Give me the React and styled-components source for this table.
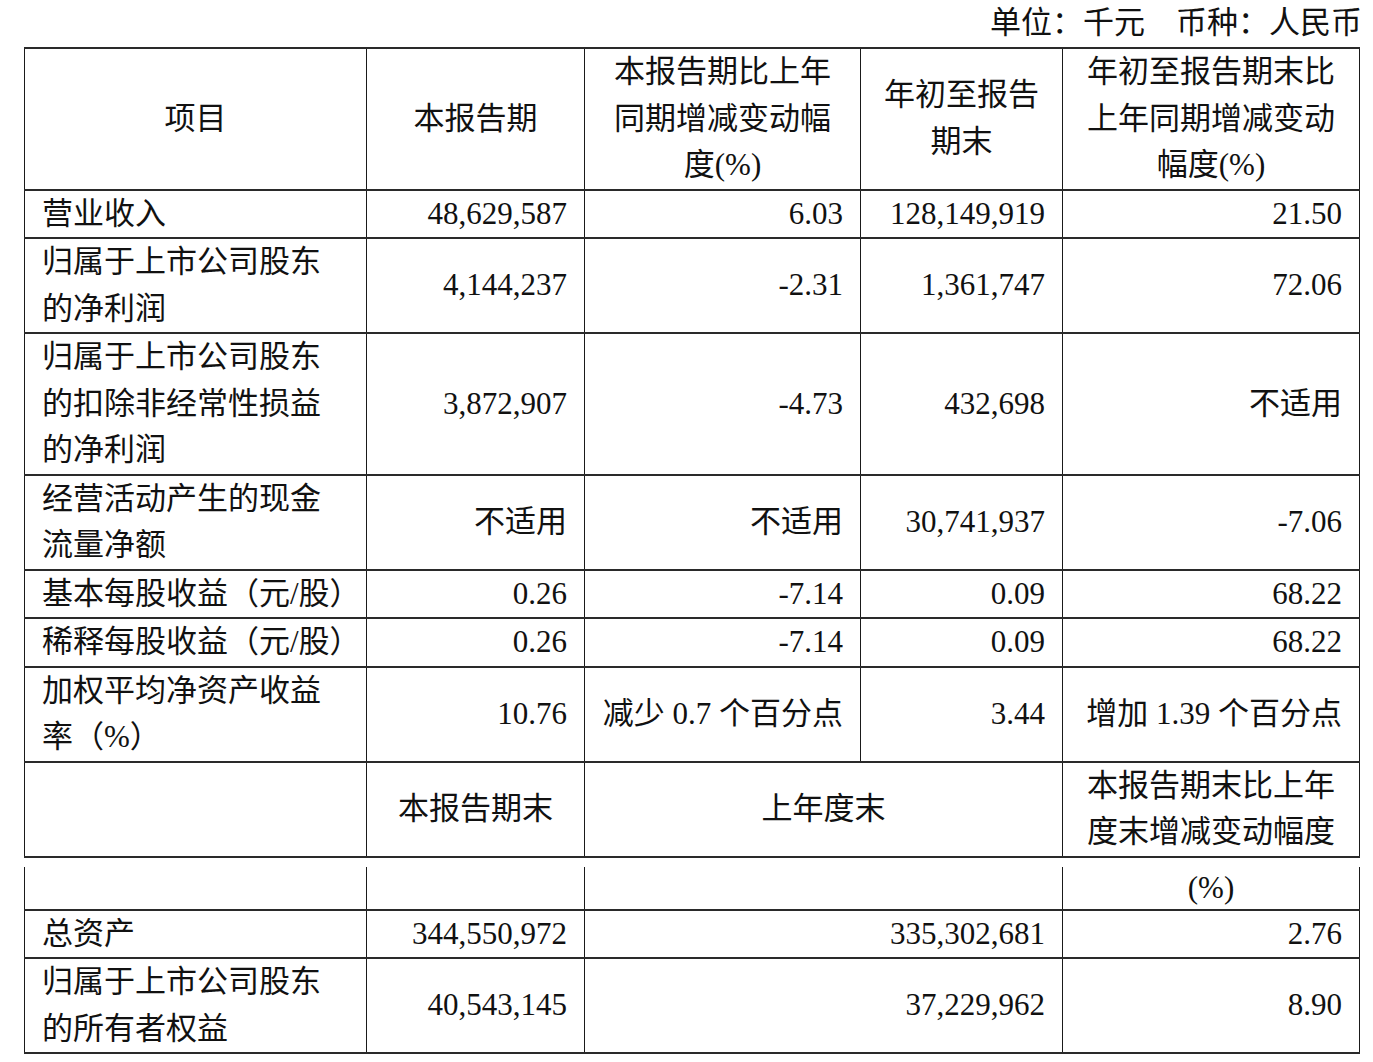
import React from 'react';
import styled, { createGlobalStyle } from 'styled-components';

const GlobalStyle = createGlobalStyle`
    body {
        margin: 0;
        background: #ffffff;
        color: #111111;
        font-family: "Liberation Serif", "Noto Sans CJK SC", serif;
    }
`;

const Page = styled.div`
    width: 1373px;
    padding-bottom: 8px;
    font-size: 31px;
`;

const UnitLine = styled.div`
    height: 47px;
    line-height: 46px;
    text-align: right;
    padding-right: 11px;
    white-space: pre;
`;

const Table = styled.table`
    margin-left: 24px;
    width: 1335px;
    table-layout: fixed;
    border-collapse: collapse;
    margin-top: ${props => props.gap || 0}px;
`;

const Cell = styled.td`
    border-left: 1px solid #1a1a1a;
    border-right: 1px solid #1a1a1a;
    border-top: ${props => props.noTop ? 'none' : '2px solid #2a2a2a'};
    border-bottom: 2px solid #2a2a2a;
    padding: 0 17px;
    line-height: ${props => props.lh || 46.5}px;
    text-align: ${props => props.align || 'left'};
    vertical-align: middle;
    white-space: nowrap;
    overflow: hidden;
`;

const widths = [342, 218, 276, 202, 297];

const Cols = () => (
    <colgroup>
        {widths.map((w, i) => <col key={i} style={{ width: w }} />)}
    </colgroup>
);

const lines = (text) => text.split('|').map((t, i, arr) => (
    <React.Fragment key={i}>{t}{i < arr.length - 1 ? <br /> : null}</React.Fragment>
));

const rows = [
    ["营业收入", "48,629,587", "6.03", "128,149,919", "21.50"],
    ["归属于上市公司股东|的净利润", "4,144,237", "-2.31", "1,361,747", "72.06"],
    ["归属于上市公司股东|的扣除非经常性损益|的净利润", "3,872,907", "-4.73", "432,698", "不适用"],
    ["经营活动产生的现金|流量净额", "不适用", "不适用", "30,741,937", "-7.06"],
    ["基本每股收益（元/股）", "0.26", "-7.14", "0.09", "68.22"],
    ["稀释每股收益（元/股）", "0.26", "-7.14", "0.09", "68.22"],
    ["加权平均净资产收益|率（%）", "10.76", "减少 0.7 个百分点", "3.44", "增加 1.39 个百分点"],
];

const assetRows = [
    ["总资产", "344,550,972", "335,302,681", "2.76"],
    ["归属于上市公司股东|的所有者权益", "40,543,145", "37,229,962", "8.90"],
];

class App extends React.Component {
    render() {
        return (
            <Page>
                <GlobalStyle />
                <UnitLine>{"单位：千元\u3000币种：人民币"}</UnitLine>
                <Table>
                    <Cols />
                    <tbody>
                        <tr>
                            <Cell align="center">{"项目"}</Cell>
                            <Cell align="center">{"本报告期"}</Cell>
                            <Cell align="center">{lines("本报告期比上年|同期增减变动幅|度(%)")}</Cell>
                            <Cell align="center">{lines("年初至报告|期末")}</Cell>
                            <Cell align="center">{lines("年初至报告期末比|上年同期增减变动|幅度(%)")}</Cell>
                        </tr>
                        {rows.map((r, i) => (
                            <tr key={i}>
                                <Cell>{lines(r[0])}</Cell>
                                <Cell align="right">{r[1]}</Cell>
                                <Cell align="right">{r[2]}</Cell>
                                <Cell align="right">{r[3]}</Cell>
                                <Cell align="right">{r[4]}</Cell>
                            </tr>
                        ))}
                        <tr>
                            <Cell></Cell>
                            <Cell align="center">{"本报告期末"}</Cell>
                            <Cell align="center" colSpan={2}>{"上年度末"}</Cell>
                            <Cell align="center">{lines("本报告期末比上年|度末增减变动幅度")}</Cell>
                        </tr>
                    </tbody>
                </Table>
                <Table gap={9}>
                    <colgroup>
                        <col style={{ width: 342 }} />
                        <col style={{ width: 218 }} />
                        <col style={{ width: 478 }} />
                        <col style={{ width: 297 }} />
                    </colgroup>
                    <tbody>
                        <tr>
                            <Cell noTop lh={42}></Cell>
                            <Cell noTop lh={42}></Cell>
                            <Cell noTop lh={42}></Cell>
                            <Cell noTop lh={42} align="center">{"(%)"}</Cell>
                        </tr>
                        {assetRows.map((r, i) => (
                            <tr key={i}>
                                <Cell>{lines(r[0])}</Cell>
                                <Cell align="right">{r[1]}</Cell>
                                <Cell align="right">{r[2]}</Cell>
                                <Cell align="right">{r[3]}</Cell>
                            </tr>
                        ))}
                    </tbody>
                </Table>
            </Page>
        );
    }
}

export default App;
